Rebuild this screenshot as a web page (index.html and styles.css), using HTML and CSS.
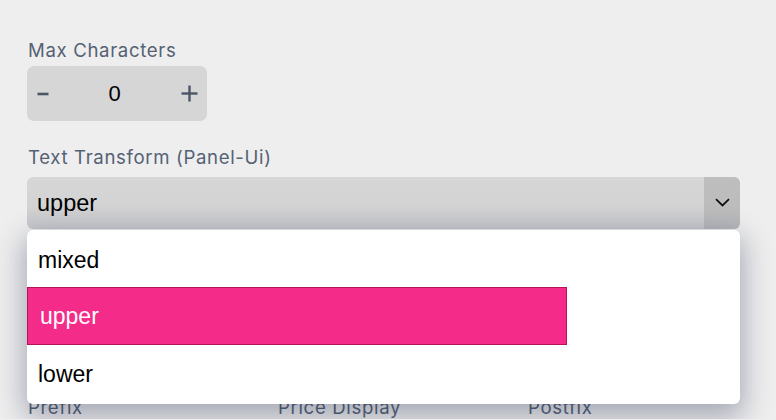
FILE: index.html
```html
<!DOCTYPE html>
<html>
<head>
<meta charset="utf-8">
<link rel="stylesheet" href="styles.css">
</head>
<body>
<div class="panel">
  <div class="field">
    <div class="label">Max Characters</div>
    <div class="stepper">
      <div class="step minus">
        <svg width="12" height="4" viewBox="0 0 12 4"><line x1="0.5" y1="2" x2="11.5" y2="2" stroke="#4a5568" stroke-width="2.6"/></svg>
      </div>
      <div class="value">0</div>
      <div class="step plus">
        <svg width="17" height="17" viewBox="0 0 17 17"><line x1="0.5" y1="8.5" x2="16.5" y2="8.5" stroke="#4a5568" stroke-width="2.4"/><line x1="8.5" y1="0.5" x2="8.5" y2="16.5" stroke="#4a5568" stroke-width="2.4"/></svg>
      </div>
    </div>
  </div>
  <div class="field field-select">
    <div class="label">Text Transform (Panel-Ui)</div>
    <div class="select-wrap">
      <div class="select">
        <div class="select-value">upper</div>
        <div class="select-btn">
          <svg width="15" height="9" viewBox="0 0 15 9"><polyline points="1,1.2 7.5,7.5 14,1.2" fill="none" stroke="#111" stroke-width="1.8"/></svg>
        </div>
      </div>
      <ul class="menu">
        <li class="option first">mixed</li>
        <li class="option selected">upper</li>
        <li class="option">lower</li>
      </ul>
    </div>
  </div>
  <div class="row">
    <div class="label">Prefix</div>
    <div class="label">Price Display</div>
    <div class="label">Postfix</div>
  </div>
</div>
</body>
</html>
```
FILE: styles.css
```css
html, body {
  margin: 0;
  padding: 0;
  background: #eeeeee;
  font-family: Inter, "Liberation Sans", sans-serif;
  overflow: hidden;
}
.panel {
  padding: 38px 36px 0 27px;
  display: flex;
  flex-direction: column;
}
.label {
  font-size: 18.6px;
  line-height: 24px;
  color: #556174;
  letter-spacing: 0.65px;
  padding-left: 1px;
}
.field .label {
  margin-bottom: 4px;
}
.stepper {
  width: 180px;
  height: 55px;
  background: #d6d6d6;
  border-radius: 7px;
  display: flex;
  align-items: center;
}
.step {
  display: flex;
  align-items: center;
  justify-content: center;
  height: 100%;
}
.minus { width: 31px; padding-top: 1px; }
.plus { width: 36px; order: 3; margin-left: auto; padding-bottom: 1px; }
.value {
  flex: 1;
  text-align: center;
  font-family: "Liberation Sans", Arial, sans-serif;
  font-size: 22px;
  color: #000;
}
.field-select {
  margin-top: 24px;
}
.field-select .label {
  margin-bottom: 8px;
}
.select-wrap {
  position: relative;
  width: 713px;
}
.select {
  height: 52px;
  border-radius: 6px;
  background: linear-gradient(#d7d7d7, #d3d3d3 55%, #c6c7ca);
  display: flex;
  overflow: hidden;
}
.select-value {
  flex: 1;
  padding-left: 10px;
  font-family: "Liberation Sans", Arial, sans-serif;
  font-size: 23.5px;
  line-height: 52px;
  color: #000;
}
.select-btn {
  width: 36px;
  background: linear-gradient(#bebebe, #bcbcbc 60%, #b5b6b9);
  display: flex;
  align-items: center;
  justify-content: center;
  padding-bottom: 2px;
}
.menu {
  position: absolute;
  left: 0;
  top: 53px;
  width: 713px;
  margin: 0;
  padding: 0;
  list-style: none;
  background: #fff;
  border-radius: 6px;
  box-shadow: 0 10px 28px 3px rgba(35, 48, 80, 0.36);
  z-index: 2;
}
.option {
  height: 57px;
  line-height: 57px;
  padding-left: 11px;
  font-family: "Liberation Sans", Arial, sans-serif;
  font-size: 23px;
  color: #000;
  box-sizing: border-box;
}
.option.first {
  line-height: 60px;
}
.option:last-child {
  height: 59px;
  line-height: 58px;
}
.option.selected {
  width: 540px;
  height: 58px;
  line-height: 56px;
  background: #f42b89;
  border: 1px solid #b3135b;
  color: #fff;
  padding-left: 12px;
}
.row {
  margin-top: 166px;
  display: grid;
  grid-template-columns: 250px 250px 250px;
}
```
